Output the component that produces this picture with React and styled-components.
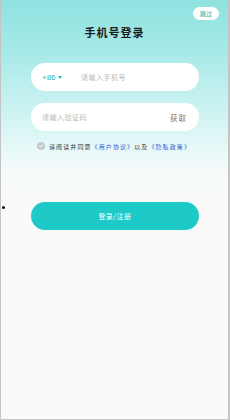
import styled, { createGlobalStyle } from "styled-components";

const GlobalStyle = createGlobalStyle`
  html, body {
    margin: 0;
    padding: 0;
    background: #fafafa;
  }
  * {
    box-sizing: border-box;
  }
`;

function CheckIcon() {
  return (
    <svg width="8" height="8" viewBox="0 0 16 16">
      <circle cx="8" cy="8" r="7.2" fill="#c9c9c9" stroke="#a9a9a9" strokeWidth="1" />
      <path d="M4.6 8.2 L7 10.5 L11.4 5.8" fill="none" stroke="#fff" strokeWidth="1.8" strokeLinecap="round" strokeLinejoin="round" />
    </svg>
  );
}

function App() {
  return (
    <>
      <GlobalStyle />
      <Screen>
        <Dot />
        <TopBar>
          <SkipButton>跳过</SkipButton>
        </TopBar>
        <Title>手机号登录</Title>
        <Form>
          <Field>
            <AreaCode>
              +86 <Caret />
            </AreaCode>
            <Placeholder>请输入手机号</Placeholder>
          </Field>
          <Field>
            <Placeholder>请输入验证码</Placeholder>
            <GetCode>获取</GetCode>
          </Field>
          <Agreement>
            <CheckIcon />
            <AgreeText>
              请阅读并同意<Link>《用户协议》</Link>以及<Link>《隐私政策》</Link>
            </AgreeText>
          </Agreement>
          <SubmitButton>登录/注册</SubmitButton>
        </Form>
      </Screen>
    </>
  );
}

const Screen = styled.div`
  position: relative;
  width: 230px;
  height: 420px;
  border-left: 1px solid #c4c4c4;
  border-right: 2px solid #c4c4c4;
  border-bottom: 1px solid #c4c4c4;
  background: linear-gradient(
    180deg,
    #8ee2e0 0%,
    #a6e9e8 12%,
    #c9f2f1 25%,
    #e6f8f8 35%,
    #f7fbfb 42%,
    #fafafa 48%,
    #fafafa 100%
  );
  font-family: "Noto Sans CJK SC", "Noto Sans", sans-serif;
`;

const Dot = styled.span`
  position: absolute;
  left: 1px;
  top: 206px;
  width: 3px;
  height: 3px;
  border-radius: 50%;
  background: #111;
`;

const TopBar = styled.div`
  display: flex;
  justify-content: flex-end;
  padding: 7px 9px 0 0;
`;

const SkipButton = styled.div`
  height: 13px;
  padding: 0 7px;
  border-radius: 7px;
  background: #fff;
  color: #2aa8a6;
  font-size: 6px;
  line-height: 13px;
`;

const Title = styled.h1`
  margin: 4px 0 0;
  text-align: center;
  font-size: 11px;
  font-weight: 700;
  letter-spacing: 1px;
  color: #1b1b1b;
  line-height: 16px;
`;

const Form = styled.div`
  display: flex;
  flex-direction: column;
  padding: 0 29px 0 30px;
  margin-top: 23px;
`;

const Field = styled.div`
  display: flex;
  align-items: center;
  height: 28px;
  margin-bottom: 12px;
  padding: 0 12px 0 11px;
  border-radius: 14px;
  background: #fff;
`;

const AreaCode = styled.span`
  display: flex;
  align-items: center;
  gap: 2px;
  width: 39px;
  color: #1fb9b7;
  font-family: "Liberation Sans", sans-serif;
  font-size: 8px;
`;

const Caret = styled.span`
  width: 0;
  height: 0;
  border-left: 2.5px solid transparent;
  border-right: 2.5px solid transparent;
  border-top: 3.5px solid #1fb9b7;
`;

const Placeholder = styled.span`
  flex: 1;
  color: #b9b9b9;
  font-size: 7px;
  letter-spacing: 0.5px;
`;

const GetCode = styled.span`
  color: #7a7a7a;
  font-size: 7.5px;
  letter-spacing: 1px;
`;

const Agreement = styled.div`
  display: flex;
  align-items: center;
  gap: 4px;
  margin: -3px 0 0 6px;
  height: 12px;
`;

const AgreeText = styled.span`
  font-size: 6px;
  color: #333;
  letter-spacing: 1.1px;
  white-space: nowrap;
`;

const Link = styled.span`
  color: #3a56d4;
`;

const SubmitButton = styled.button`
  margin-top: 50px;
  height: 28px;
  border: none;
  border-radius: 14px;
  background: #1ecac8;
  color: #fff;
  font-family: "Noto Sans CJK SC", sans-serif;
  font-size: 7px;
  letter-spacing: 0.5px;
  padding: 0;
`;

export default App;
